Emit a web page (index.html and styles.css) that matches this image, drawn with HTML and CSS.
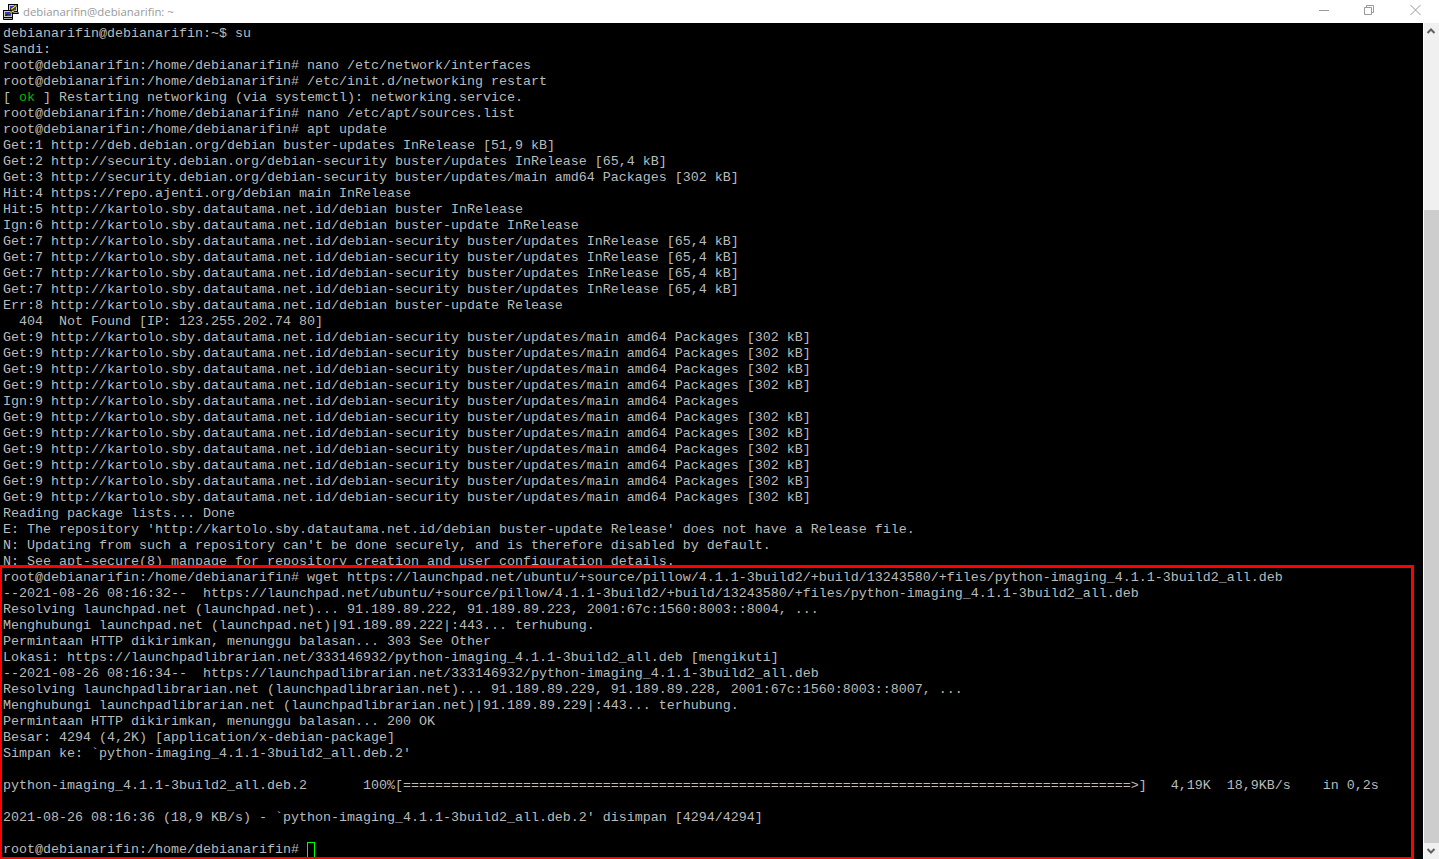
FILE: index.html
```html
<!DOCTYPE html>
<html lang="id">
<head>
<meta charset="utf-8">
<title>debianarifin@debianarifin: ~</title>
<link rel="stylesheet" href="styles.css">
</head>
<body>
<div class="window">
  <header class="titlebar">
    <svg class="app-icon" viewBox="0 0 16 16" width="16" height="16" aria-hidden="true">
      <rect x="5.500" y="0.500" width="9" height="7" fill="#c8c8c8" stroke="#000"/>
      <rect x="7" y="2" width="6" height="4" fill="#2f3fd0"/>
      <path d="M5.500 7.500h9l1 2h-9z" fill="#a8a8a8" stroke="#000"/>
      <rect x="0.500" y="6.500" width="9" height="7" fill="#c8c8c8" stroke="#000"/>
      <rect x="2" y="8" width="6" height="4" fill="#2f3fd0"/>
      <path d="M0.500 13.500h9v2h-9z" fill="#a8a8a8" stroke="#000"/>
      <path d="M13 0.500 7 5 9.500 6.500 2.500 11.500 12 7.500 9.500 5.500 14 2z" fill="#f8e020" stroke="#000" stroke-width="0.6"/>
    </svg>
    <span class="title">debianarifin@debianarifin: ~</span>
    <div class="controls">
      <svg class="ctl" viewBox="0 0 46 22" width="46" height="22" aria-hidden="true"><path d="M18 10.500h10" stroke="#999" fill="none"/></svg>
      <svg class="ctl" viewBox="0 0 46 22" width="46" height="22" aria-hidden="true"><path d="M17.500 7.500h7v7h-7zM19.500 7.500v-2h7v7h-2" stroke="#999" fill="none"/></svg>
      <svg class="ctl" viewBox="0 0 46 22" width="46" height="22" aria-hidden="true"><path d="M17.500 5 27.500 15M27.500 5 17.500 15" stroke="#999" fill="none"/></svg>
    </div>
  </header>
  <div class="body">
    <pre class="terminal">debianarifin@debianarifin:~$ su
Sandi:
root@debianarifin:/home/debianarifin# nano /etc/network/interfaces
root@debianarifin:/home/debianarifin# /etc/init.d/networking restart
[ <span class="ok">ok</span> ] Restarting networking (via systemctl): networking.service.
root@debianarifin:/home/debianarifin# nano /etc/apt/sources.list
root@debianarifin:/home/debianarifin# apt update
Get:1 http://deb.debian.org/debian buster-updates InRelease [51,9 kB]
Get:2 http://security.debian.org/debian-security buster/updates InRelease [65,4 kB]
Get:3 http://security.debian.org/debian-security buster/updates/main amd64 Packages [302 kB]
Hit:4 https://repo.ajenti.org/debian main InRelease
Hit:5 http://kartolo.sby.datautama.net.id/debian buster InRelease
Ign:6 http://kartolo.sby.datautama.net.id/debian buster-update InRelease
Get:7 http://kartolo.sby.datautama.net.id/debian-security buster/updates InRelease [65,4 kB]
Get:7 http://kartolo.sby.datautama.net.id/debian-security buster/updates InRelease [65,4 kB]
Get:7 http://kartolo.sby.datautama.net.id/debian-security buster/updates InRelease [65,4 kB]
Get:7 http://kartolo.sby.datautama.net.id/debian-security buster/updates InRelease [65,4 kB]
Err:8 http://kartolo.sby.datautama.net.id/debian buster-update Release
  404  Not Found [IP: 123.255.202.74 80]
Get:9 http://kartolo.sby.datautama.net.id/debian-security buster/updates/main amd64 Packages [302 kB]
Get:9 http://kartolo.sby.datautama.net.id/debian-security buster/updates/main amd64 Packages [302 kB]
Get:9 http://kartolo.sby.datautama.net.id/debian-security buster/updates/main amd64 Packages [302 kB]
Get:9 http://kartolo.sby.datautama.net.id/debian-security buster/updates/main amd64 Packages [302 kB]
Ign:9 http://kartolo.sby.datautama.net.id/debian-security buster/updates/main amd64 Packages
Get:9 http://kartolo.sby.datautama.net.id/debian-security buster/updates/main amd64 Packages [302 kB]
Get:9 http://kartolo.sby.datautama.net.id/debian-security buster/updates/main amd64 Packages [302 kB]
Get:9 http://kartolo.sby.datautama.net.id/debian-security buster/updates/main amd64 Packages [302 kB]
Get:9 http://kartolo.sby.datautama.net.id/debian-security buster/updates/main amd64 Packages [302 kB]
Get:9 http://kartolo.sby.datautama.net.id/debian-security buster/updates/main amd64 Packages [302 kB]
Get:9 http://kartolo.sby.datautama.net.id/debian-security buster/updates/main amd64 Packages [302 kB]
Reading package lists... Done
E: The repository 'http://kartolo.sby.datautama.net.id/debian buster-update Release' does not have a Release file.
N: Updating from such a repository can't be done securely, and is therefore disabled by default.
N: See apt-secure(8) manpage for repository creation and user configuration details.
root@debianarifin:/home/debianarifin# wget https://launchpad.net/ubuntu/+source/pillow/4.1.1-3build2/+build/13243580/+files/python-imaging_4.1.1-3build2_all.deb
--2021-08-26 08:16:32--  https://launchpad.net/ubuntu/+source/pillow/4.1.1-3build2/+build/13243580/+files/python-imaging_4.1.1-3build2_all.deb
Resolving launchpad.net (launchpad.net)... 91.189.89.222, 91.189.89.223, 2001:67c:1560:8003::8004, ...
Menghubungi launchpad.net (launchpad.net)|91.189.89.222|:443... terhubung.
Permintaan HTTP dikirimkan, menunggu balasan... 303 See Other
Lokasi: https://launchpadlibrarian.net/333146932/python-imaging_4.1.1-3build2_all.deb [mengikuti]
--2021-08-26 08:16:34--  https://launchpadlibrarian.net/333146932/python-imaging_4.1.1-3build2_all.deb
Resolving launchpadlibrarian.net (launchpadlibrarian.net)... 91.189.89.229, 91.189.89.228, 2001:67c:1560:8003::8007, ...
Menghubungi launchpadlibrarian.net (launchpadlibrarian.net)|91.189.89.229|:443... terhubung.
Permintaan HTTP dikirimkan, menunggu balasan... 200 OK
Besar: 4294 (4,2K) [application/x-debian-package]
Simpan ke: `python-imaging_4.1.1-3build2_all.deb.2'

python-imaging_4.1.1-3build2_all.deb.2       100%[===========================================================================================>]   4,19K  18,9KB/s    in 0,2s

2021-08-26 08:16:36 (18,9 KB/s) - `python-imaging_4.1.1-3build2_all.deb.2' disimpan [4294/4294]

root@debianarifin:/home/debianarifin# <span class="cursor"> </span></pre>
    <div class="scrollbar">
      <div class="arrow">
        <svg viewBox="0 0 16 16" width="16" height="16" aria-hidden="true"><path d="M4.500 10 8 6.500 11.500 10" stroke="#606060" stroke-width="2" fill="none"/></svg>
      </div>
      <div class="track-space"></div>
      <div class="thumb"></div>
      <div class="arrow">
        <svg viewBox="0 0 16 16" width="16" height="16" aria-hidden="true"><path d="M4.500 6 8 9.500 11.500 6" stroke="#606060" stroke-width="2" fill="none"/></svg>
      </div>
    </div>
  </div>
  <div class="highlight"></div>
</div>
</body>
</html>
```
FILE: styles.css
```css
html, body {
  margin: 0;
  padding: 0;
  height: 100%;
  overflow: hidden;
  background: #000;
}

.window {
  position: relative;
  display: flex;
  flex-direction: column;
  height: 859px;
  background: #fff;
}

.titlebar {
  flex: 0 0 23px;
  display: flex;
  align-items: center;
  padding-left: 3px;
  background: #fff;
}

.app-icon {
  flex: none;
  margin-right: 4px;
}

.title {
  font: 11.4px "Open Sans", "Noto Sans", sans-serif;
  color: #999;
  white-space: nowrap;
}

.controls {
  margin-left: auto;
  display: flex;
  align-self: flex-start;
}

.ctl {
  display: block;
}

.body {
  flex: 1;
  display: flex;
  min-height: 0;
}

.terminal {
  flex: 1;
  margin: 0;
  padding: 3px 0 0 3px;
  background: #000;
  color: #bbb;
  font-family: "Liberation Mono", "Courier New", monospace;
  font-size: 13.333px;
  line-height: 16px;
  overflow: hidden;
  white-space: pre;
}

.ok {
  color: #00bb00;
}

.cursor {
  display: inline-block;
  box-sizing: border-box;
  width: 8px;
  height: 16px;
  vertical-align: top;
  border: 1px solid #00ff00;
}

.scrollbar {
  flex: 0 0 15px;
  display: flex;
  flex-direction: column;
  margin-left: 1px;
  background: #f0f0f0;
}

.arrow {
  flex: 0 0 16px;
  overflow: hidden;
}

.arrow svg {
  display: block;
  margin-left: -1px;
}

.track-space {
  flex: 0 0 171px;
}

.thumb {
  flex: 1;
  background: #cdcdcd;
}

.highlight {
  position: absolute;
  left: 0;
  top: 565px;
  width: 1414px;
  height: 294px;
  box-sizing: border-box;
  border: solid #f00;
  border-width: 3px 3px 2px 2px;
  pointer-events: none;
}
```
